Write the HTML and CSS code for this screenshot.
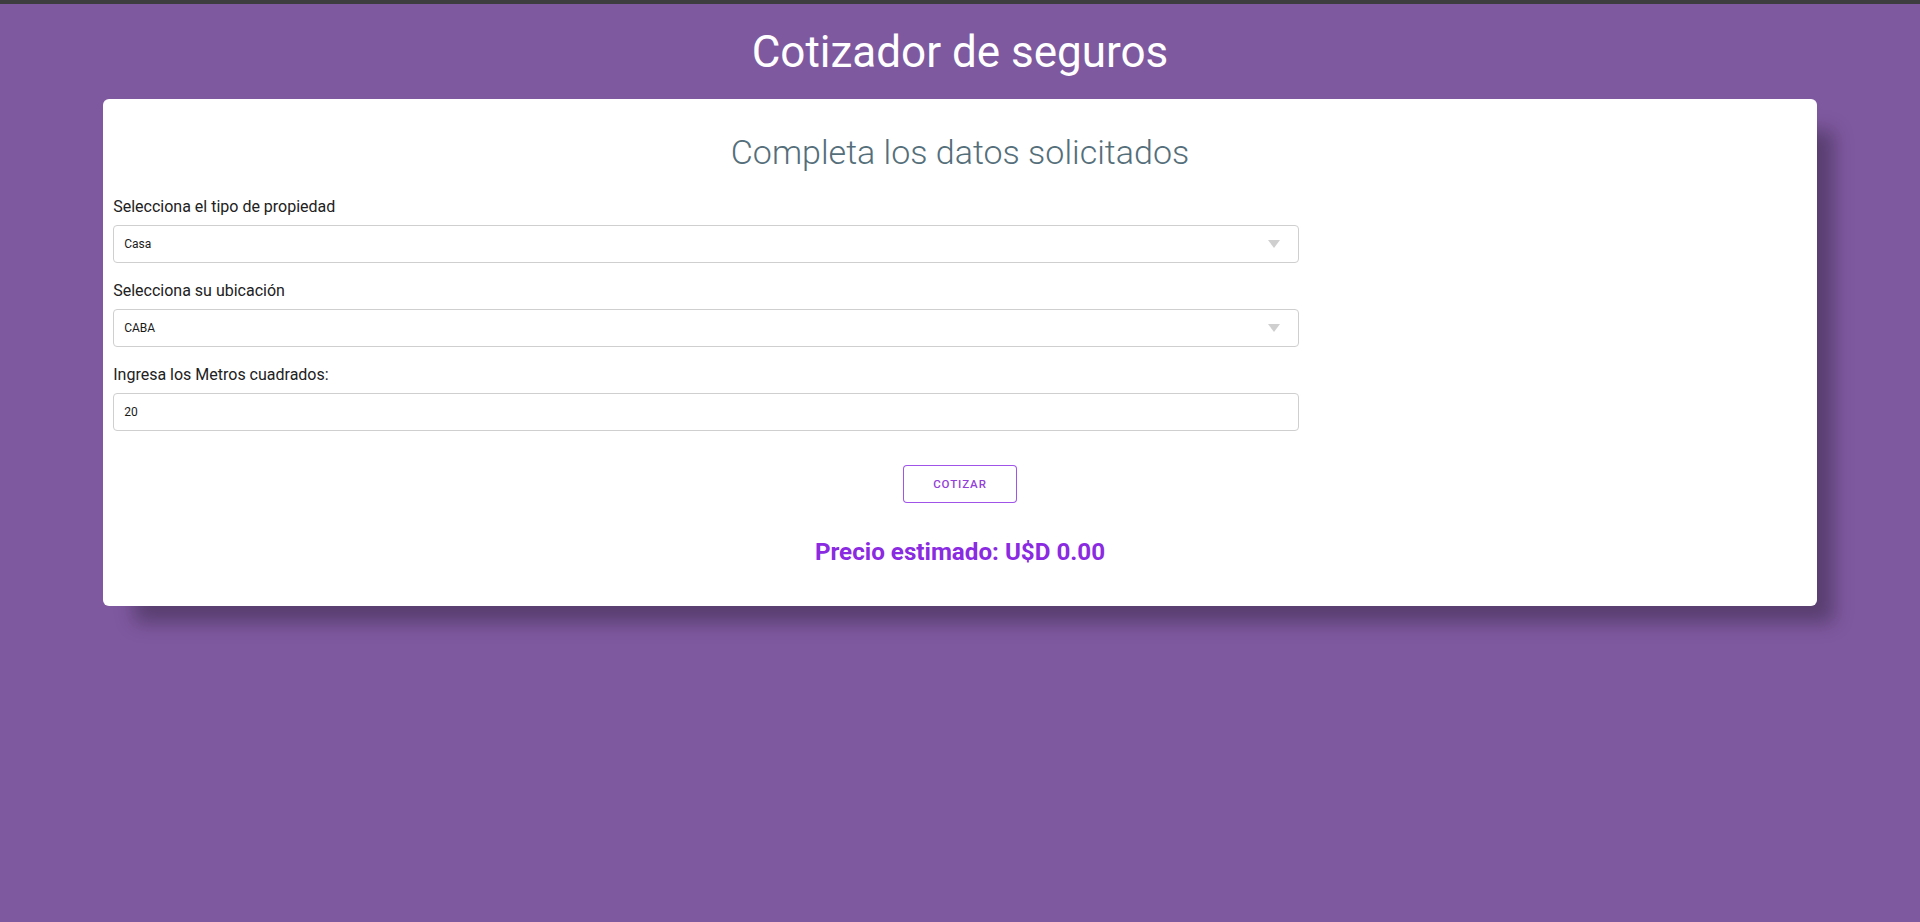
FILE: index.html
```html
<!DOCTYPE html>
<html lang="es">
<head>
<meta charset="utf-8">
<title>Cotizador de seguros</title>
<link rel="stylesheet" href="styles.css">
</head>
<body>
  <h1 class="title">Cotizador de seguros</h1>
  <main class="card">
    <h2 class="subtitle">Completa los datos solicitados</h2>
    <form class="form">
      <div class="field">
        <label class="label" for="tipo">Selecciona el tipo de propiedad</label>
        <div class="select-wrap">
          <select id="tipo" class="control">
            <option>Casa</option>
            <option>Departamento</option>
          </select>
        </div>
      </div>
      <div class="field">
        <label class="label" for="ubicacion">Selecciona su ubicación</label>
        <div class="select-wrap">
          <select id="ubicacion" class="control">
            <option>CABA</option>
            <option>Tandil</option>
          </select>
        </div>
      </div>
      <div class="field">
        <label class="label" for="metros">Ingresa los Metros cuadrados:</label>
        <input id="metros" class="control" type="text" value="20">
      </div>
      <button type="button" class="btn">COTIZAR</button>
    </form>
    <p class="price">Precio estimado: U$D 0.00</p>
  </main>
</body>
</html>
```

FILE: styles.css
```css
html {
  border-top: 4px solid #3d3c3f;
}

body {
  margin: 8px;
  padding-bottom: 60px;
  font-family: Roboto, "Liberation Sans", Arial, sans-serif;
  background: #7f59a0;
}

.title {
  margin: 14px 0 21px;
  font-size: 44px;
  font-weight: 400;
  line-height: normal;
  color: #ffffff;
  text-align: center;
}

.card {
  width: 90%;
  margin: 0 auto;
  box-sizing: border-box;
  padding: 10px 10px 40px;
  background: #ffffff;
  border-radius: 6px;
  box-shadow: 24px 24px 18px -7px rgba(0, 0, 0, 0.3);
}

.subtitle {
  margin: 23px 0 25px;
  font-size: 34px;
  font-weight: 300;
  line-height: normal;
  color: #546e7a;
  text-align: center;
}

.form {
  display: flex;
  flex-direction: column;
}

.field {
  display: flex;
  flex-direction: column;
  width: 70%;
  margin-bottom: 18px;
}

.label {
  margin-bottom: 9px;
  font-size: 16px;
  line-height: normal;
  color: #212121;
}

.select-wrap {
  position: relative;
}

.select-wrap::after {
  content: "";
  position: absolute;
  right: 19px;
  top: 15px;
  border-left: 6px solid transparent;
  border-right: 6px solid transparent;
  border-top: 8px solid #cfcfcf;
  pointer-events: none;
}

.control {
  display: block;
  width: 100%;
  height: 38px;
  box-sizing: border-box;
  margin: 0;
  padding: 0 10px;
  border: 1px solid #cfcfcf;
  border-radius: 4px;
  background: #ffffff;
  font-family: Roboto, "Liberation Sans", Arial, sans-serif;
  font-size: 12px;
  color: #1a1a1a;
  -webkit-appearance: none;
  appearance: none;
  outline: none;
}

.btn {
  align-self: center;
  width: 114px;
  height: 38px;
  margin-top: 16px;
  padding: 0;
  border: 1px solid rgba(138, 43, 226, 0.8);
  border-radius: 4px;
  background: #ffffff;
  font-family: Roboto, "Liberation Sans", Arial, sans-serif;
  font-size: 11.5px;
  font-weight: 500;
  letter-spacing: 0.9px;
  color: #9340d8;
  cursor: pointer;
}

.price {
  margin: 35px 0 0;
  font-size: 24.2px;
  font-weight: 700;
  line-height: normal;
  color: #8a2be2;
  text-align: center;
}
```
